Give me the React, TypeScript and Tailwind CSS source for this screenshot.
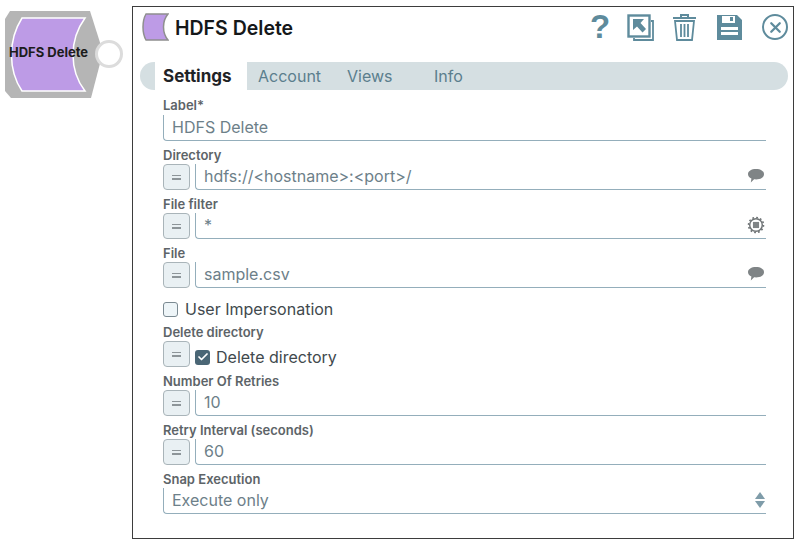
import { Check, X } from "lucide-react";

const font = { fontFamily: "Inter, 'Noto Sans', sans-serif" };

function EqButton() {
  return (
    <button className="w-[27px] h-[26px] shrink-0 flex flex-col items-center justify-center gap-[2px] rounded-[4px] border border-[#a9b4b9] bg-[#e9f0f3]">
      <span className="block w-[9px] h-[1.5px] bg-[#8d9599]" />
      <span className="block w-[9px] h-[1.5px] bg-[#8d9599]" />
    </button>
  );
}

function Bubble() {
  return (
    <svg width="18" height="15" viewBox="0 0 18 15" className="shrink-0">
      <path d="M9 1c4.600 0 8 2 8 5.200s-3.400 5.200-8 5.200c-.7 0-1.300 0-1.900-.1L3.800 14.500l.6-4C2.300 9.500 1 8 1 6.200 1 3 4.400 1 9 1z" fill="#7f8486" />
    </svg>
  );
}

function Gear() {
  return (
    <svg width="18" height="18" viewBox="0 0 20 20" className="shrink-0">
      <circle cx="10" cy="10" r="7" fill="none" stroke="#6f7476" strokeWidth="1.600" />
      <circle cx="10" cy="10" r="8.300" fill="none" stroke="#6f7476" strokeWidth="1.800" strokeDasharray="2 2.340" />
      <rect x="6.600" y="6.600" width="6.800" height="6.800" fill="#7f8486" />
    </svg>
  );
}

function FieldLabel({ text }: { text: string }) {
  return <div className="h-[15px] text-[13px] leading-[15px] font-semibold text-[#5d6468]">{text}</div>;
}

function Input({ value, right }: { value: string; right?: React.ReactNode }) {
  return (
    <div className="flex-1 h-[26px] flex items-center justify-between border-l border-b-[1.5px] border-[#94aebb] rounded-bl-[4px] pl-[8px] pr-[1px] pb-[2px] text-[16px] text-[#6d8089]">
      <span>{value}</span>
      {right}
    </div>
  );
}

function Field({ label, value, right }: { label: string; value: string; right?: React.ReactNode }) {
  return (
    <div className="h-[49px] pt-[3px]">
      <FieldLabel text={label} />
      <div className="flex gap-[5px] mt-[1px]">
        <EqButton />
        <Input value={value} right={right} />
      </div>
    </div>
  );
}

function NodeIcon() {
  return (
    <div className="relative w-[125px] h-[110px]">
      <svg width="125" height="110" viewBox="0 0 125 110">
        <path d="M10 11H90L103 52 91 98H11L5 91V19z" fill="#b5b5b5" />
        <path d="M22 18H85C69 40 69 70 85 91H22C8 70 8 40 22 18z" fill="#bd9be6" stroke="#fff" strokeWidth="1.500" />
        <circle cx="109" cy="54" r="12.500" fill="#fff" stroke="#dcdcdc" strokeWidth="3" />
      </svg>
      <div className="absolute left-[9px] top-[44px] text-[13px] leading-[16px] font-bold text-[#1c1c1c] whitespace-nowrap">HDFS Delete</div>
    </div>
  );
}

function HeaderIcons() {
  const c = "#5e8b9c";
  return (
    <div className="flex items-center h-[40px] ml-auto">
      <span className="w-[18px] text-[33px] leading-[30px] font-bold text-[#5e8b9c] mr-[19px]" style={{ fontFamily: "'Liberation Sans', sans-serif" }}>?</span>
      <svg width="27" height="27" viewBox="0 0 27 27" className="mr-[18px]">
        <path d="M7 24V26H26V7H24" fill="none" stroke={c} strokeWidth="1.800" />
        <rect x="1.500" y="1.500" width="21" height="21" fill="none" stroke={c} strokeWidth="2.400" />
        <path d="M6 5H17L13.500 9 19 15 15.500 18.500 10 12.500 6 16z" fill={c} />
      </svg>
      <svg width="25" height="27" viewBox="0 0 25 27" className="mr-[19px]">
        <path d="M9 3V1H16V3M1 4H24" fill="none" stroke={c} strokeWidth="2" />
        <path d="M3 7H22L20 26H5zM9 10V23M12.500 10V23M16 10V23" fill="none" stroke={c} strokeWidth="1.800" />
      </svg>
      <svg width="27" height="27" viewBox="0 0 27 27" className="mr-[19px]">
        <path d="M1 1H21L26 6V26H1z" fill={c} />
        <rect x="6" y="2" width="13" height="7" fill="#fff" />
        <rect x="14" y="3" width="3" height="4" fill={c} />
        <rect x="5" y="13" width="17" height="3" fill="#fff" />
        <rect x="5" y="18" width="17" height="3" fill="#fff" />
      </svg>
      <span className="w-[26px] h-[26px] rounded-full border-2 border-[#5e8b9c] flex items-center justify-center">
        <X size={17} strokeWidth={3.200} color={c} />
      </span>
    </div>
  );
}

function Tabs() {
  return (
    <div className="ml-[7px] mr-[5px] h-[28px] rounded-full bg-[#d5dfe2] flex text-[16px] leading-[28px] text-[#5b7e8d]">
      <div className="ml-[15px] w-[92px] bg-white pl-[8px] text-[17px] font-bold text-[#1f2326]">Settings</div>
      <div className="ml-[11px] w-[89px]">Account</div>
      <div className="w-[87px]">Views</div>
      <div>Info</div>
    </div>
  );
}

export default function App() {
  return (
    <div className="w-[800px] h-[543px] bg-white flex" style={font}>
      <div className="w-[132px] shrink-0">
        <NodeIcon />
      </div>
      <div className="mt-[6px] w-[662px] h-[533px] border-[1.5px] border-[#3d3d3d]">
        <div className="flex h-[40px] pl-[8px] pr-[5px] items-center">
          <svg width="28" height="28" viewBox="0 0 28 28" className="shrink-0">
            <path d="M5 1H27C21 8 21 20 27 27H5C1 20 1 8 5 1z" fill="#bd9be6" stroke="#8f8f8f" strokeWidth="1.500" />
          </svg>
          <h1 className="ml-[6px] mt-[3px] text-[19.5px] font-semibold text-[#15181a]">HDFS Delete</h1>
          <HeaderIcons />
        </div>
        <div className="mt-[15px]">
          <Tabs />
        </div>
        <div className="pl-[30px] pr-[27px] mt-[8px]">
          <div className="h-[47px]">
            <FieldLabel text="Label*" />
            <div className="mt-[2px] flex h-[26px]">
              <Input value="HDFS Delete" />
            </div>
          </div>
          <Field label="Directory" value="hdfs://<hostname>:<port>/" right={<Bubble />} />
          <Field label="File filter" value="*" right={<Gear />} />
          <Field label="File" value="sample.csv" right={<Bubble />} />
          <div className="h-[32px] pt-[2px] flex items-center gap-[7px] text-[16px] text-[#41494d]">
            <span className="w-[15px] h-[15px] rounded-[3px] border border-[#7b8a92] bg-[#eef5f8]" />
            User Impersonation
          </div>
          <div className="h-[47px] pt-[1px]">
            <FieldLabel text="Delete directory" />
            <div className="flex mt-[1px] gap-[5px]">
              <EqButton />
              <div className="flex items-center gap-[6px] mt-[3px] h-[26px] text-[16px] text-[#41494d]">
                <span className="w-[15px] h-[15px] rounded-[3px] bg-[#4a6675] flex items-center justify-center">
                  <Check size={12} strokeWidth={3.500} color="#fff" />
                </span>
                Delete directory
              </div>
            </div>
          </div>
          <Field label="Number Of Retries" value="10" />
          <Field label="Retry Interval (seconds)" value="60" />
          <div className="pt-[3px]">
            <FieldLabel text="Snap Execution" />
            <div className="mt-[1px] flex h-[26px]">
              <Input
                value="Execute only"
                right={
                  <span className="flex flex-col gap-[2px]">
                    <svg width="10" height="7" viewBox="0 0 10 7"><path d="M5 0L10 7H0z" fill="#7f9ca9" /></svg>
                    <svg width="10" height="7" viewBox="0 0 10 7"><path d="M0 0H10L5 7z" fill="#7f9ca9" /></svg>
                  </span>
                }
              />
            </div>
          </div>
        </div>
      </div>
    </div>
  );
}
